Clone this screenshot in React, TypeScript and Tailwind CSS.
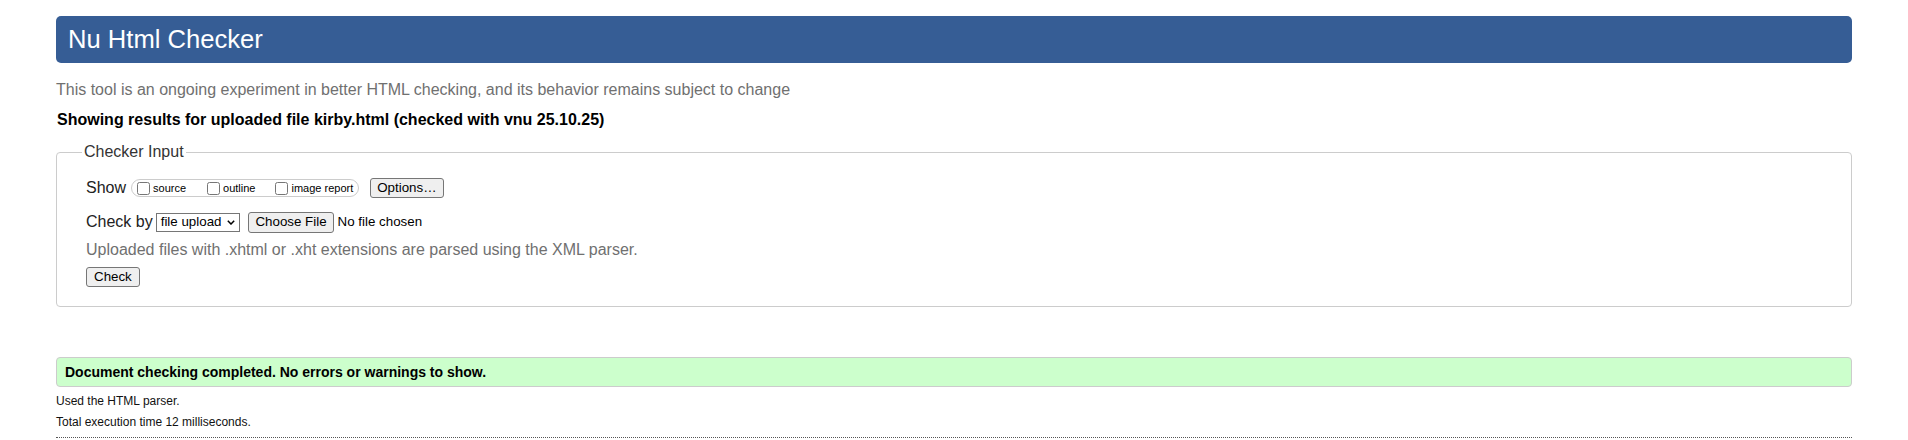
import React from "react";

function Btn({ children, className = "" }: { children: React.ReactNode; className?: string }) {
  return (
    <button
      type="button"
      className={`inline-flex items-center justify-center bg-[#efefef] border border-[#767676] rounded-[3px] px-[6px] text-[13.33px] text-black leading-none ${className}`}
    >
      {children}
    </button>
  );
}

export default function App() {
  return (
    <div className="min-h-[440px] bg-white px-[56px] pt-[16px] font-['Liberation_Sans',Arial,sans-serif] text-black">
      <h1 className="flex h-[47px] items-center rounded-[5px] bg-[#365d95] pl-[12px] pb-[1px] text-[25.6px] font-normal text-white">
        Nu Html Checker
      </h1>

      <p className="mt-[18px] text-[16px] leading-[18px] text-[#707070]">
        This tool is an ongoing experiment in better HTML checking, and its behavior remains subject to change
      </p>

      <p className="mt-[12px] pl-[1px] text-[16px] font-bold leading-[18px]">
        Showing results for uploaded file kirby.html (checked with vnu 25.10.25)
      </p>

      <fieldset className="mt-[14px] rounded-[4px] border border-[#ccc] px-[29px] pt-[16px] pb-[18px]">
        <legend className="-ml-[4px] px-[2px] text-[16px] leading-[18px] text-[#333]">Checker Input</legend>

        <div className="flex h-[22px] items-center">
          <span className="text-[16px] text-[#222]">Show</span>
          <span className="ml-[5px] inline-flex h-[18px] items-center rounded-[9px] border border-[#ccc] px-[5px]">
            <input type="checkbox" className="m-0 h-[13px] w-[13px]" />
            <span className="ml-[3px] text-[11px]">source</span>
            <input type="checkbox" className="m-0 ml-[21px] h-[13px] w-[13px]" />
            <span className="ml-[3px] text-[11px]">outline</span>
            <input type="checkbox" className="m-0 ml-[20px] h-[13px] w-[13px]" />
            <span className="ml-[3px] text-[11px]">image report</span>
          </span>
          <Btn className="ml-[11px] h-[20px]">Options…</Btn>
        </div>

        <div className="mt-[12px] flex h-[22px] items-center">
          <span className="text-[16px] text-[#222]">Check by</span>
          <span className="ml-[3px] inline-flex h-[19px] items-center border border-[#767676] bg-white pl-[4px] pr-[4px] text-[13.33px]">
            file upload
            <svg className="ml-[6px]" width="8" height="5" viewBox="0 0 8 5" fill="none">
              <path d="M0.8 0.8 L4 4 L7.2 0.8" stroke="#000" strokeWidth="1.5" />
            </svg>
          </span>
          <Btn className="ml-[8px] h-[21px]">Choose File</Btn>
          <span className="ml-[4px] text-[13.33px]">No file chosen</span>
        </div>

        <p className="mt-[8px] text-[16px] leading-[18px] text-[#707070]">
          Uploaded files with .xhtml or .xht extensions are parsed using the XML parser.
        </p>

        <Btn className="mt-[8px] h-[20px] px-[7px]">Check</Btn>
      </fieldset>

      <div className="mt-[50px] flex h-[30px] items-center rounded-[4px] border border-[#ccc] bg-[#ccffcc] px-[8px] pt-[1px] text-[14px] font-bold">
        Document checking completed. No errors or warnings to show.
      </div>

      <p className="mt-[7px] text-[12px] leading-[14px] text-[#111]">Used the HTML parser.</p>
      <p className="mt-[7px] text-[12px] leading-[14px] text-[#111]">Total execution time 12 milliseconds.</p>

      <div className="mt-[8px] border-t border-dotted border-[#555]" />
    </div>
  );
}
